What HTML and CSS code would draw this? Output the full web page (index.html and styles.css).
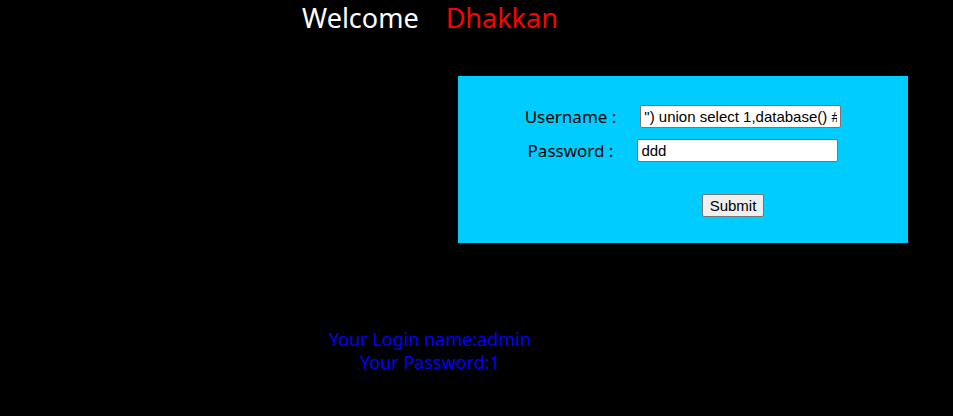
FILE: index.html
```html
<!DOCTYPE html>
<html lang="en">
<head>
  <meta charset="UTF-8" />
  <title>Less-12 Post Error Based - Double quotes</title>
  <link rel="stylesheet" href="styles.css">
</head>
<body>
  <div class="page">
    <div class="welcome">Welcome<span class="name">Dhakkan</span></div>

    <div class="login">
      <form action="" name="form1" method="post">
        <div class="row">Username :<input type="text" class="uname" name="uname" value="&quot;) union select 1,database() #" /></div>
        <div class="row">Password :<input type="text" class="passwd" name="passwd" value="ddd" /></div>
        <div class="submit-row"><input type="submit" name="submit" value="Submit" /></div>
      </form>
    </div>

    <div class="result">
      Your Login name:admin<br>
      Your Password:1
    </div>
  </div>
</body>
</html>
```

FILE: styles.css
```css
body { margin: 0; background: #000; font-family: "Noto Sans", "Open Sans", sans-serif; }
.page { width: 860px; }

.welcome { color: #fff; font-size: 27px; text-align: center; line-height: 36px; }
.welcome .name { color: #f00; margin-left: 27px; }

.login {
  margin: 40px 0 0 458px; width: 450px; height: 167px;
  background: #0cf; box-sizing: border-box; padding-top: 28px;
}
.row { display: flex; justify-content: center; align-items: center; font-size: 17px; color: #000; height: 24px; }
.row + .row { margin-top: 10px; }
.row input {
  font-family: "Liberation Sans", Arial, sans-serif; font-size: 15px;
  width: 201px; height: 23px; box-sizing: border-box; padding: 1px 3px;
  border: 1px solid #767676; border-radius: 2px; background: #fff; color: #000;
}
.uname { margin-left: 24px; }
.passwd { margin-left: 24px; }
.submit-row { text-align: center; margin: 32px 0 0 100px; }
.submit-row input {
  font-family: "Liberation Sans", Arial, sans-serif; font-size: 15px;
  height: 23px; padding: 1px 7px; border: 1px solid #767676; border-radius: 2px;
  background: #efefef; color: #000;
}

.result { margin-top: 85px; text-align: center; color: #00f; font-size: 18px; line-height: 23px; }
```
